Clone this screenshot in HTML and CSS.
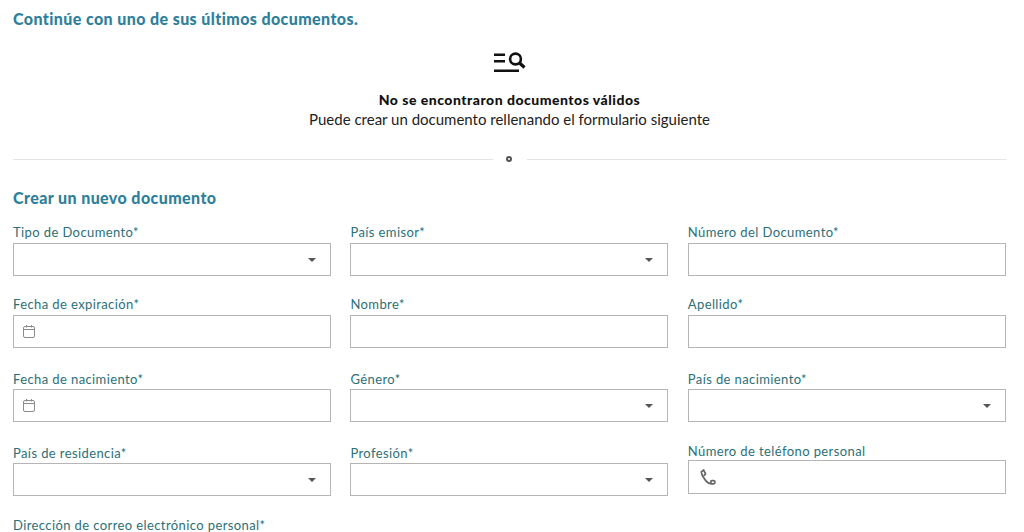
FILE: index.html
```html
<!DOCTYPE html>
<html lang="es">
<head>
    <meta charset="UTF-8">
    <title>Documentos</title>
    <link rel="stylesheet" href="styles.css">
</head>
<body>
    <main class="page">
        <h2 class="section-title recent-title">Continúe con uno de sus últimos documentos.</h2>

        <section class="empty">
            <svg class="empty-icon" width="32" height="21" viewBox="0 0 32 21" fill="none" stroke="#111" stroke-width="2.6">
                <path d="M0 2.8H11M0 9.3H11M0 18.7H25"/>
                <circle cx="21.5" cy="7" r="5.4"/>
                <path d="M25 10.5L30.5 15.5" stroke-width="3.2"/>
            </svg>
            <p class="empty-title">No se encontraron documentos válidos</p>
            <p class="empty-text">Puede crear un documento rellenando el formulario siguiente</p>
        </section>

        <div class="divider">
            <span class="divider-line"></span>
            <span class="divider-dot"></span>
            <span class="divider-line"></span>
        </div>

        <h2 class="section-title">Crear un nuevo documento</h2>

        <form class="form-grid">
            <div class="field">
                <label>Tipo de Documento*</label>
                <div class="input"><span class="caret"></span></div>
            </div>
            <div class="field">
                <label>País emisor*</label>
                <div class="input"><span class="caret"></span></div>
            </div>
            <div class="field">
                <label>Número del Documento*</label>
                <div class="input"></div>
            </div>

            <div class="field">
                <label>Fecha de expiración*</label>
                <div class="input">
                    <svg class="calendar" width="12" height="13" viewBox="0 0 12 13" fill="none" stroke="#8a8a8a">
                        <rect x="0.5" y="1.5" width="11" height="11" rx="1.5"/>
                        <path d="M0.5 4.5H11.5M3.5 0V2.5M8.5 0V2.5"/>
                    </svg>
                </div>
            </div>
            <div class="field">
                <label>Nombre*</label>
                <div class="input"></div>
            </div>
            <div class="field">
                <label>Apellido*</label>
                <div class="input"></div>
            </div>

            <div class="field field-low">
                <label>Fecha de nacimiento*</label>
                <div class="input">
                    <svg class="calendar" width="12" height="13" viewBox="0 0 12 13" fill="none" stroke="#8a8a8a">
                        <rect x="0.5" y="1.5" width="11" height="11" rx="1.5"/>
                        <path d="M0.5 4.5H11.5M3.5 0V2.5M8.5 0V2.5"/>
                    </svg>
                </div>
            </div>
            <div class="field field-low">
                <label>Género*</label>
                <div class="input"><span class="caret"></span></div>
            </div>
            <div class="field field-low">
                <label>País de nacimiento*</label>
                <div class="input"><span class="caret"></span></div>
            </div>

            <div class="field field-low">
                <label>País de residencia*</label>
                <div class="input"><span class="caret"></span></div>
            </div>
            <div class="field field-low">
                <label>Profesión*</label>
                <div class="input"><span class="caret"></span></div>
            </div>
            <div class="field field-phone">
                <label>Número de teléfono personal</label>
                <div class="input input-phone">
                    <svg class="phone" width="16" height="16" viewBox="0 0 16 16" fill="none" stroke="#666" stroke-width="1.7" stroke-linecap="round" stroke-linejoin="round">
                        <path d="M3.6 1.2L1.6 2.4C1 3 1.6 5.2 3.4 8.2C5.4 11.6 8 14.4 10.4 14.6L11.4 14.6"/>
                        <path d="M3.6 1.2L5.6 5L4.2 6.4"/>
                        <rect x="10.6" y="11.6" width="4.4" height="3.2" rx="1.6"/>
                    </svg>
                </div>
            </div>

            <div class="field field-last">
                <label>Dirección de correo electrónico personal*</label>
            </div>
        </form>
    </main>
</body>
</html>
```

FILE: styles.css
```css
html, body {
    height: 532px;
    overflow: hidden;
}

body {
    font-family: 'Lato', 'Open Sans', sans-serif;
    margin: 0;
    padding: 0;
    background-color: #fff;
    color: #111;
}

.page {
    height: 532px;
    box-sizing: border-box;
    overflow: hidden;
    padding: 10px 18px 0 13px;
}

.section-title {
    margin: 0;
    font-size: 16px;
    line-height: 18px;
    font-weight: 900;
    color: #2f7f9b;
    letter-spacing: 0.4px;
}

.empty {
    display: flex;
    flex-direction: column;
    align-items: center;
    padding-top: 24px;
}

.empty-icon {
    display: block;
}

.empty-title {
    margin: 17px 0 0;
    font-size: 14px;
    line-height: 19px;
    font-weight: 900;
    letter-spacing: 0.5px;
    color: #111;
}

.empty-text {
    margin: 1px 0 0;
    font-size: 15px;
    line-height: 19px;
    color: #222;
}

.divider {
    display: flex;
    align-items: center;
    gap: 13px;
    margin-top: 27px;
}

.divider-line {
    flex: 1;
    height: 1px;
    background-color: #e4e4e4;
}

.divider-dot {
    width: 6px;
    height: 6px;
    box-sizing: border-box;
    border: 2px solid #555;
    border-radius: 50%;
    margin-right: 2px;
}

.divider + .section-title {
    margin-top: 27px;
}

.form-grid {
    display: grid;
    grid-template-columns: repeat(3, 318px);
    grid-template-rows: 72px 74px 74px 74px auto;
    column-gap: 19.4px;
    margin-top: 17px;
}

.field label {
    display: block;
    font-size: 13px;
    line-height: 16px;
    color: #2c6f78;
    letter-spacing: 0.4px;
    margin-bottom: 3px;
}

.field-low label {
    margin-top: 1px;
    margin-bottom: 2px;
}

.field-last label {
    line-height: 14px;
    margin-bottom: 0;
}

.input {
    display: flex;
    align-items: center;
    justify-content: flex-end;
    box-sizing: border-box;
    height: 33px;
    padding: 0 14px 0 9px;
    border: 1px solid #b5b5b5;
    background-color: #fff;
}

.field-phone {
    margin-top: -1px;
}

.field-phone label {
    margin-bottom: 1px;
}

.input-phone {
    justify-content: flex-start;
    height: 34px;
}

.caret {
    width: 0;
    height: 0;
    border-left: 4px solid transparent;
    border-right: 4px solid transparent;
    border-top: 4px solid #555;
}

.calendar {
    margin-right: auto;
}

.phone {
    margin-left: 2px;
}
```
